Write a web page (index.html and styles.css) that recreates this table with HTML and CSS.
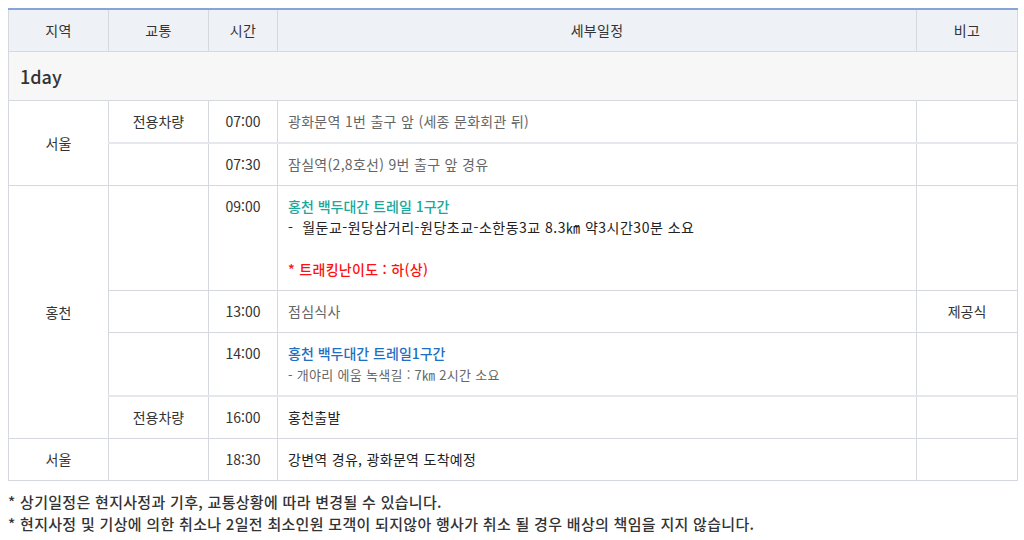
FILE: index.html
```html
<!DOCTYPE html>
<html lang="ko">
<head>
<meta charset="utf-8">
<link rel="stylesheet" href="styles.css">
</head>
<body>
<table class="sched">
  <colgroup>
    <col class="c1"><col class="c2"><col class="c3"><col class="c4"><col class="c5">
  </colgroup>
  <thead>
    <tr><th>지역</th><th>교통</th><th>시간</th><th>세부일정</th><th>비고</th></tr>
  </thead>
  <tbody>
    <tr class="day"><td colspan="5">1day</td></tr>
    <tr class="r42">
      <td rowspan="2" class="ctr">서울</td>
      <td class="ctr">전용차량</td>
      <td class="ctr">07:00</td>
      <td class="dt grey">광화문역 1번 출구 앞 (세종 문화회관 뒤)</td>
      <td></td>
    </tr>
    <tr class="r41 thick">
      <td></td>
      <td class="ctr">07:30</td>
      <td class="dt grey">잠실역(2,8호선) 9번 출구 앞 경유</td>
      <td></td>
    </tr>
    <tr class="top">
      <td rowspan="4" class="ctr mid">홍천</td>
      <td></td>
      <td class="ctr">09:00</td>
      <td class="dt">
        <div class="green">홍천 백두대간 트레일 1구간</div>
        <div class="dark det">-&nbsp; 월둔교-원당삼거리-원당초교-소한동3교 8.3㎞ 약3시간30분 소요</div>
        <div>&nbsp;</div>
        <div class="red">* 트래킹난이도 : 하(상)</div>
      </td>
      <td></td>
    </tr>
    <tr class="r41">
      <td></td>
      <td class="ctr">13:00</td>
      <td class="dt grey">점심식사</td>
      <td class="ctr">제공식</td>
    </tr>
    <tr class="top">
      <td></td>
      <td class="ctr">14:00</td>
      <td class="dt">
        <div class="blue">홍천 백두대간 트레일1구간</div>
        <div class="grey sm">- 개야리 에움 녹색길 : 7㎞ 2시간 소요</div>
      </td>
      <td></td>
    </tr>
    <tr class="r41 thick">
      <td class="ctr">전용차량</td>
      <td class="ctr">16:00</td>
      <td class="dt dark">홍천출발</td>
      <td></td>
    </tr>
    <tr class="r41">
      <td class="ctr">서울</td>
      <td></td>
      <td class="ctr">18:30</td>
      <td class="dt dark">강변역 경유, 광화문역 도착예정</td>
      <td></td>
    </tr>
  </tbody>
</table>
<div class="notes">
  <p>* 상기일정은 현지사정과 기후, 교통상황에 따라 변경될 수 있습니다.</p>
  <p>* 현지사정 및 기상에 의한 취소나 2일전 최소인원 모객이 되지않아 행사가 취소 될 경우 배상의 책임을 지지 않습니다.</p>
</div>
</body>
</html>
```

FILE: styles.css
```css
html, body {
  margin: 0;
  padding: 0;
  background: #ffffff;
}
body {
  padding: 8px 7px 0 8px;
  font-family: "Noto Sans CJK KR", "Noto Sans", sans-serif;
  font-size: 14px;
  color: #333;
}
.sched {
  width: 1009px;
  border-collapse: collapse;
  table-layout: fixed;
  border-top: 2px solid #86a6d8;
}
.c1 { width: 100px; }
.c2 { width: 100px; }
.c3 { width: 69px; }
.c4 { width: 639px; }
.c5 { width: 101px; }
.sched th, .sched td {
  border: 1px solid #d5d8de;
  padding: 10px 10px;
  line-height: 21px;
  vertical-align: middle;
  letter-spacing: 0.3px;
}
.sched th {
  background: #eef1f6;
  font-weight: 400;
  color: #333;
  height: 21px;
  text-align: center;
}
.sched tr.day td {
  background: #f7f7f7;
  font-size: 18px;
  font-weight: 500;
  color: #333;
  height: 28px;
  padding: 10px 11px;
  letter-spacing: 0;
}
.r42 td { height: 20px; }
.r41 td { height: 19px; }
.thick td { border-top: 2px solid #e5e7ec; height: 18px; }
.thick td.mid { border-top: 1px solid #d5d8de; }
.top td { vertical-align: top; }
.top td.mid { vertical-align: middle; }
.ctr { text-align: center; color: #333; }
.sched td.ctr { letter-spacing: 0; }
.sched td.mid { vertical-align: middle; }
.dt { padding-left: 10px; }
.det { letter-spacing: 0.5px; }
.green { letter-spacing: 0; }
.blue { letter-spacing: 0; }
.grey { color: #666; }
.dark { color: #222; }
.sm { font-size: 13px; }
.green { color: #1aa89a; font-weight: 500; }
.blue { color: #1f6fc4; font-weight: 500; }
.red { color: #ff1010; font-weight: 500; }
.notes {
  margin-top: 10px;
}
.notes p {
  margin: 0;
  line-height: 22px;
  font-size: 15px;
  font-weight: 500;
  color: #333;
  letter-spacing: 0.3px;
}
```
